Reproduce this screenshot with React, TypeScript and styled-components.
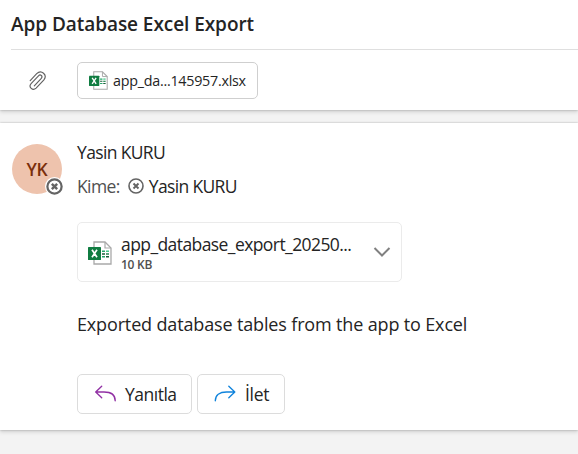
import React from "react";
import styled, { createGlobalStyle } from "styled-components";

const GlobalStyle = createGlobalStyle`
  * { box-sizing: border-box; }
  body {
    margin: 0;
    background: #f3f3f3;
    color: #242424;
    font-family: "Open Sans", "Noto Sans", sans-serif;
    overflow: hidden;
  }
`;

const Page = styled.main`
  display: flex;
  flex-direction: column;
  gap: 13px;
  height: 454px;
  overflow: hidden;
`;

const Card = styled.section`
  background: #fff;
  box-shadow: 0 0 2px rgba(0, 0, 0, 0.26), 0 2px 4px rgba(0, 0, 0, 0.14);
`;

const HeaderCard = styled(Card)`
  height: 110px;
  padding-left: 11px;
`;

const MessageCard = styled(Card)`
  display: flex;
  height: 307px;
  padding: 19px 0 0 12px;
`;

const Label = styled.span<{ $size: number; $spacing?: number; $weight?: number; $color?: string }>`
  font-size: ${(p) => p.$size}px;
  letter-spacing: ${(p) => p.$spacing ?? 0}px;
  font-weight: ${(p) => p.$weight ?? 400};
  color: ${(p) => p.$color ?? "#242424"};
  line-height: 24px;
  white-space: nowrap;
`;

const TitleBar = styled.header`
  display: flex;
  align-items: center;
  height: 50px;
  padding-bottom: 2px;
  border-bottom: 1px solid #dfdfdf;
`;

const AttachmentRow = styled.div`
  display: flex;
  align-items: center;
  height: 61px;
  padding-left: 17px;
  gap: 29px;
`;

const AttachmentChip = styled.button`
  display: flex;
  align-items: center;
  gap: 5px;
  width: 181px;
  height: 37px;
  padding: 0 0 0 11px;
  border: 1px solid #cfcfcf;
  border-radius: 5px;
  background: #fff;
  font: inherit;
`;

const Avatar = styled.div`
  position: relative;
  display: flex;
  align-items: center;
  justify-content: center;
  flex: none;
  width: 50px;
  height: 50px;
  margin-top: 2px;
  border-radius: 50%;
  background: #eec3ad;
`;

const PresenceBadge = styled.span`
  position: absolute;
  right: -2px;
  bottom: -2px;
  display: flex;
  width: 19px;
  height: 19px;
  align-items: center;
  justify-content: center;
  border-radius: 50%;
  background: #fff;
`;

const Content = styled.div`
  margin-left: 15px;
`;

const Line = styled.div<{ $gap?: number; $top?: number }>`
  display: flex;
  align-items: center;
  height: 20px;
  gap: ${(p) => p.$gap ?? 0}px;
  margin-top: ${(p) => p.$top ?? 0}px;
`;

const FileCard = styled.div`
  display: flex;
  align-items: center;
  width: 325px;
  height: 60px;
  margin-top: 26px;
  padding: 1px 10px 0 10px;
  border: 1px solid #ebebeb;
  border-radius: 5px;
`;

const FileInfo = styled.div`
  display: flex;
  flex-direction: column;
  flex: 1;
  margin-left: 9px;
`;

const FileSize = styled(Label)`
  line-height: 17px;
`;

const Actions = styled.div`
  display: flex;
  gap: 5px;
  margin-top: 40px;
`;

const ActionButton = styled.button<{ $width: number }>`
  display: flex;
  align-items: center;
  gap: 9px;
  width: ${(p) => p.$width}px;
  height: 40px;
  padding: 0 0 0 16px;
  border: 1px solid #dcdcdc;
  border-radius: 5px;
  background: #fff;
  font: inherit;
`;

const Icon = styled.svg`
  display: block;
  flex: none;
`;

const ExcelIcon = ({ width, height }: { width: number; height: number }) => (
  <Icon width={width} height={height} viewBox="0 0 24 24" fill="none">
    <path d="M6 1h11l6 6v16H6z" fill="#fff" stroke="#a9a9a9" strokeWidth="1.3" />
    <path d="M17 1v6h6" stroke="#a9a9a9" strokeWidth="1.2" />
    <path d="M14 10.2h3M14 15.8h3" stroke="#21a366" strokeWidth="1.4" />
    <path d="M14 13h3M18 15.8h3" stroke="#185c37" strokeWidth="1.4" />
    <path d="M18 10.2h3" stroke="#33c481" strokeWidth="1.4" />
    <path d="M18 13h3" stroke="#107c41" strokeWidth="1.4" />
    <rect x="0" y="6" width="13" height="13" rx=".6" fill="#107c41" />
    <path d="M4 8.800l5 7.400M9 8.800l-5 7.400" stroke="#fff" strokeWidth="1.7" />
  </Icon>
);

const Offline = ({ size, bold }: { size: number; bold?: boolean }) => (
  <Icon width={size} height={size} viewBox="0 0 16 16" fill="none" stroke="#646464">
    <circle cx="8" cy="8" r={bold ? 6.7 : 7} strokeWidth={bold ? 2.1 : 1.6} />
    <path d="M5.5 5.5l5 5M10.5 5.5l-5 5" strokeWidth={bold ? 2.3 : 1.9} />
  </Icon>
);

const Paperclip = () => (
  <Icon width="20" height="22" viewBox="0 0 20 22" fill="none" stroke="#616161" strokeWidth="1.15" strokeLinecap="round">
    <path d="M2.2 10.6l6.500-6.900c4.600-4.500 11.300 1.300 7 6.400l-7.600 8c-3.400 3.200-8-1-5-4.500l7.400-7.800c2-2 4.600.4 2.800 2.500l-7 7.500" />
  </Icon>
);

const Arrow = ({ forward }: { forward?: boolean }) => (
  <Icon width="22" height="18" viewBox="0 0 22 18" fill="none" stroke={forward ? "#0f83dc" : "#9130a4"} strokeWidth="1.35" strokeLinecap="round" strokeLinejoin="round">
    {forward ? (
      <path d="M14.8 1.300l6 5.700-6 5.700M20.500 7h-8C5.500 7 1.300 10 1.300 15.800" />
    ) : (
      <path d="M7.700 1.300l-6 5.700 6 5.700M2 7h8c7 0 11.200 3 11.200 8.800" />
    )}
  </Icon>
);

export default function App() {
  return (
    <>
      <GlobalStyle />
      <Page>
        <HeaderCard>
          <TitleBar>
            <Label as="h1" $size={19} $weight={600} $spacing={-0.06}>App Database Excel Export</Label>
          </TitleBar>
          <AttachmentRow>
            <Paperclip />
            <AttachmentChip>
              <ExcelIcon width={19} height={19} />
              <Label $size={14.3} $spacing={-0.25}>app_da...145957.xlsx</Label>
            </AttachmentChip>
          </AttachmentRow>
        </HeaderCard>
        <MessageCard>
          <Avatar>
            <Label $size={17.5} $weight={600} $spacing={-0.3} $color="#7a2f0c">YK</Label>
            <PresenceBadge><Offline size={17} bold /></PresenceBadge>
          </Avatar>
          <Content>
            <Line><Label $size={17.5} $spacing={-0.65}>Yasin KURU</Label></Line>
            <Line $top={14} $gap={8}>
              <Label $size={17.5} $spacing={-0.6} $color="#505050">Kime:</Label>
              <Line $gap={5}>
                <Offline size={16} />
                <Label $size={17.5} $spacing={-0.65}>Yasin KURU</Label>
              </Line>
            </Line>
            <FileCard>
              <ExcelIcon width={24} height={24} />
              <FileInfo>
                <Label $size={17.5} $spacing={-0.58}>app_database_export_20250...</Label>
                <FileSize $size={12} $weight={600} $spacing={-0.25} $color="#505050">10 KB</FileSize>
              </FileInfo>
              <Icon width="18" height="12" viewBox="0 0 18 12" fill="none" stroke="#808080" strokeWidth="2">
                <path d="M1.500 1l7.500 7.500L16.500 1" />
              </Icon>
            </FileCard>
            <Line $top={32}><Label $size={18} $spacing={-0.15}>Exported database tables from the app to Excel</Label></Line>
            <Actions>
              <ActionButton $width={115}><Arrow /><Label $size={17.5} $spacing={-0.5}>Yanıtla</Label></ActionButton>
              <ActionButton $width={88}><Arrow forward /><Label $size={17.5} $spacing={-0.3}>İlet</Label></ActionButton>
            </Actions>
          </Content>
        </MessageCard>
      </Page>
    </>
  );
}
